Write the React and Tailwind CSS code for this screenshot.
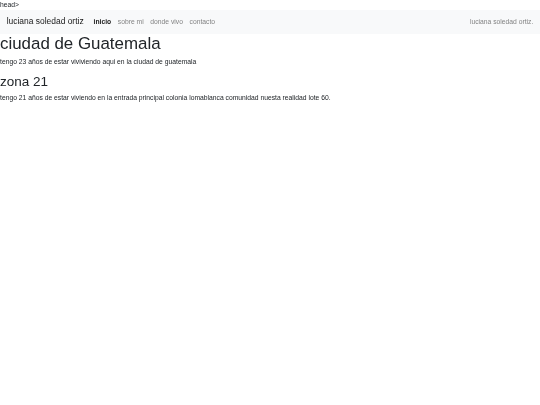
export default function App() {
  return (
    <div className="min-h-[405px] bg-white text-[#212529] text-[6.75px] leading-[10px] will-change-transform" style={{ fontFamily: '"Liberation Sans", Arial, sans-serif' }}>
      <div>head&gt;</div>
      <nav className="flex items-center justify-between bg-[#f8f9fa] px-[6.7px] py-[3.4px]">
        <div className="flex items-center">
          <span className="mr-[6.7px] py-[2.1px] text-[8.45px] leading-[12.6px] text-black/90">luciana soledad ortiz</span>
          <div className="flex items-center">
            <span className="px-[3.3px] font-bold text-black/90">inicio</span>
            <span className="px-[3.3px] text-black/50">sobre mi</span>
            <span className="px-[3.3px] text-black/50">donde vivo</span>
            <span className="px-[3.3px] text-black/50">contacto</span>
          </div>
        </div>
        <span className="text-black/50">luciana soledad ortiz.</span>
      </nav>
      <h1 className="mb-[3.4px] text-[16.9px] leading-[20.2px] font-normal">ciudad de Guatemala</h1>
      <p className="mb-[6.7px]">tengo 23 años de estar viviviendo aqui en la ciudad de guatemala</p>
      <h2 className="mb-[3.4px] text-[13.5px] leading-[16.1px] font-normal">zona 21</h2>
      <p>tengo 21 años de estar viviendo en la entrada principal colonia lomablanca comunidad nuesta realidad lote 60.</p>
    </div>
  );
}
